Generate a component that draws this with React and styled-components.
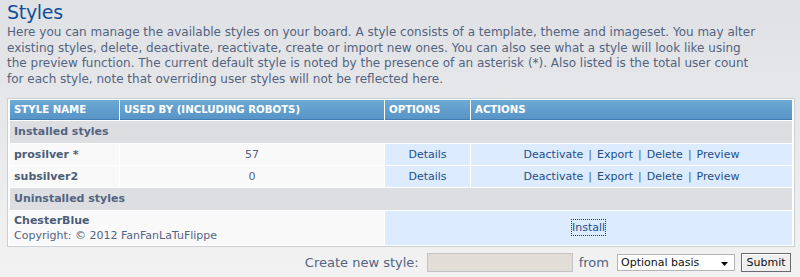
import React from 'react'
import styled, { createGlobalStyle } from 'styled-components'

const GlobalStyle = createGlobalStyle`
  html, body {
    margin: 0;
    padding: 0;
  }
  body {
    background: linear-gradient(to bottom, #dfe1e4 0%, #e8e9eb 50%, #f2f2f2 100%);
    font-family: "DejaVu Sans", Verdana, sans-serif;
    color: #536482;
    height: 277px;
    overflow: hidden;
  }
`

const Page = styled.div`
  padding: 0 6px 0 7px;
`

const Title = styled.h1`
  margin: 0;
  font-size: 19px;
  font-weight: normal;
  line-height: 25px;
  height: 25px;
  color: #115098;
  letter-spacing: -0.3px;
`

const Intro = styled.p`
  margin: 0 0 10px;
  font-size: 12px;
  line-height: 15.7px;
  color: #536482;
  white-space: nowrap;
`

const Table = styled.table`
  width: 788px;
  border: 1px solid #ccd0d4;
  background: #fff;
  border-spacing: 1px;
  padding: 0 1px;
  font-size: 11px;
`

const HeadCell = styled.th`
  height: 19px;
  padding: 0 4px;
  text-align: left;
  font-size: 10.2px;
  font-weight: bold;
  color: #fff;
  text-transform: uppercase;
  background: linear-gradient(to bottom, #6ca9d4, #5894c6);
  border-bottom: 1px solid #3f7db2;
  width: ${p => p.$w}px;
`

const GroupCell = styled.td`
  height: 22px;
  padding: 0 4px;
  background: #dcdee2;
  font-weight: bold;
  color: #536482;
`

const Cell = styled.td`
  height: ${p => p.$h || 21}px;
  padding: 0 4px;
  background: ${p => (p.$blue ? '#dcebfe' : '#f9f9f9')};
  text-align: ${p => p.$align || 'left'};
  color: #536482;
`

const Name = styled.strong`
  color: #4c5d78;
`

const Small = styled.div`
  margin-top: 2px;
  color: #536482;
`

const Link = styled.a`
  color: #1d4f8a;
  text-decoration: none;
`

const Sep = styled.span`
  margin: 0 5px;
  color: #536482;
`

const FocusLink = styled(Link)`
  outline: 1px dotted #1d3a66;
  outline-offset: 0;
  padding: 1px 0;
`

const Form = styled.div`
  display: flex;
  justify-content: flex-end;
  align-items: center;
  gap: 6px;
  margin-top: 6px;
  padding-right: 3px;
`

const Label = styled.span`
  color: #536482;
  font-size: 13px;
`

const TextInput = styled.input`
  width: 146px;
  height: 19px;
  box-sizing: border-box;
  border: 1px solid #c3c3c3;
  background: #e2ded7;
  padding: 0 1px;
  margin: 0 0 0 2px;
`

const SelectBox = styled.div`
  position: relative;
  width: 118px;
  height: 17px;
  border: 1px solid #b4b4b4;
  background: #fff;
  margin-left: 2px;
  font-size: 11px;
  color: #111;
  display: flex;
  align-items: center;
  padding-left: 3px;
  box-sizing: border-box;
`

const Arrow = styled.svg`
  position: absolute;
  right: 6px;
  top: 7px;
`

const Button = styled.button`
  height: 19px;
  width: 50px;
  padding: 0;
  font-family: "DejaVu Sans", Verdana, sans-serif;
  font-size: 11px;
  color: #111;
  background: #efefef;
  border: 1px solid #6b6b6b;
  box-shadow: inset 1px 1px 0 #fff;
`

const installed = [
  { name: 'prosilver *', used: 57 },
  { name: 'subsilver2', used: 0 },
]

const Actions = () => (
  <>
    <Link href="#">Deactivate</Link><Sep>|</Sep>
    <Link href="#">Export</Link><Sep>|</Sep>
    <Link href="#">Delete</Link><Sep>|</Sep>
    <Link href="#">Preview</Link>
  </>
)

export default function App() {
  return (
    <Page>
      <GlobalStyle />
      <Title>Styles</Title>
      <Intro>
        Here you can manage the available styles on your board. A style consists of a template, theme and imageset. You may alter<br />
        existing styles, delete, deactivate, reactivate, create or import new ones. You can also see what a style will look like using<br />
        the preview function. The current default style is noted by the presence of an asterisk (*). Also listed is the total user count<br />
        for each style, note that overriding user styles will not be reflected here.
      </Intro>

      <Table>
        <thead>
          <tr>
            <HeadCell $w={101}>Style name</HeadCell>
            <HeadCell $w={256}>Used by (including robots)</HeadCell>
            <HeadCell $w={77}>Options</HeadCell>
            <HeadCell>Actions</HeadCell>
          </tr>
        </thead>
        <tbody>
          <tr>
            <GroupCell colSpan={4}>Installed styles</GroupCell>
          </tr>
          {installed.map(s => (
            <tr key={s.name}>
              <Cell><Name>{s.name}</Name></Cell>
              <Cell $align="center">{s.used}</Cell>
              <Cell $blue $align="center"><Link href="#">Details</Link></Cell>
              <Cell $blue $align="center"><Actions /></Cell>
            </tr>
          ))}
          <tr>
            <GroupCell colSpan={4}>Uninstalled styles</GroupCell>
          </tr>
          <tr>
            <Cell colSpan={2} $h={34}>
              <Name>ChesterBlue</Name>
              <Small>Copyright: © 2012 FanFanLaTuFlippe</Small>
            </Cell>
            <Cell colSpan={2} $blue $align="center" $h={34}>
              <FocusLink href="#">Install</FocusLink>
            </Cell>
          </tr>
        </tbody>
      </Table>

      <Form>
        <Label>Create new style:</Label>
        <TextInput type="text" />
        <Label>from</Label>
        <SelectBox>
          Optional basis
          <Arrow width="7" height="4" viewBox="0 0 7 4">
            <path d="M0 0h7L3.5 4z" fill="#000" />
          </Arrow>
        </SelectBox>
        <Button>Submit</Button>
      </Form>
    </Page>
  )
}
